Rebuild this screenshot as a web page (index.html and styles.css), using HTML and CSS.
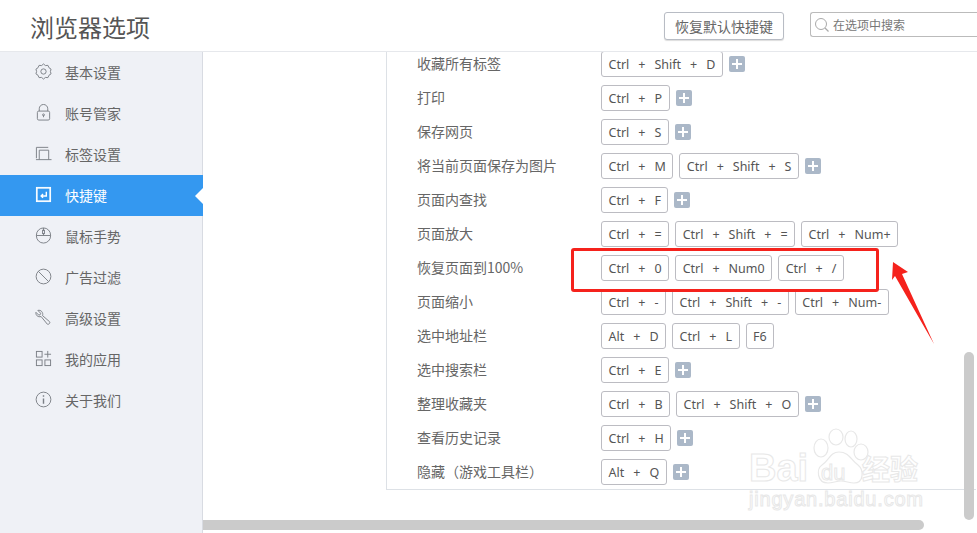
FILE: index.html
```html
<!DOCTYPE html>
<html lang="zh-CN">
<head>
<meta charset="utf-8">
<title>浏览器选项</title>
<link rel="stylesheet" href="styles.css">
</head>
<body>
<div class="app">
  <header class="header">
    <h1 class="title">浏览器选项</h1>
    <button class="reset">恢复默认快捷键</button>
    <div class="search">
      <svg class="search-icon" width="16" height="16" viewBox="0 0 16 16"><circle cx="7" cy="7" r="5.5" fill="none" stroke="#aaa" stroke-width="1"/><path d="M11 11l3.5 3.5" stroke="#aaa" stroke-width="1.2" fill="none"/></svg>
      <span>在选项中搜索</span>
    </div>
  </header>
  <div class="body">
    <nav class="side">
      <a class="nav"><svg class="ico" viewBox="0 0 18 18"><path d="M9 1l2 1.700 2.700-.2 1.100 2.500 2.200 1.500-.7 2.500.7 2.500-2.200 1.500-1.100 2.500-2.700-.2-2 1.700-2-1.700-2.700.2-1.100-2.500-2.200-1.500.7-2.500-.7-2.500 2.200-1.500 1.100-2.500 2.700.2z"/><circle cx="9" cy="9" r="2.800"/></svg>基本设置</a>
      <a class="nav"><svg class="ico" viewBox="0 0 18 18"><rect x="2.500" y="7.500" width="13" height="9.500" rx="1.500"/><path d="M4.500 7.500V5a4.500 4.500 0 0 1 9 0v2.500"/><circle cx="9" cy="11.500" r="1"/><path d="M9 12v2"/></svg>账号管家</a>
      <a class="nav"><svg class="ico" viewBox="0 0 18 18"><path d="M1.500 14V2.500H14M4.500 15.500V5.500h10v10M1 15.500h16.500"/></svg>标签设置</a>
      <a class="nav active"><svg class="ico" viewBox="0 0 18 18"><rect x="1.500" y="1.500" width="15" height="15" fill="#fff" stroke="#fff"/><rect x="2.800" y="2.800" width="12.400" height="12.400" fill="#3498f0" stroke="none"/><path d="M12 6v4.500H6.500M8.500 8.500l-2 2 2 2" stroke="#fff" stroke-width="1.500"/></svg>快捷键</a>
      <a class="nav"><svg class="ico" viewBox="0 0 18 18"><rect x="1.500" y="1" width="15" height="16" rx="7.500"/><path d="M1.500 9h15M9 1v3M9 7v2"/><rect x="8" y="3.500" width="2" height="3.500"/></svg>鼠标手势</a>
      <a class="nav"><svg class="ico" viewBox="0 0 18 18"><circle cx="9" cy="9" r="7.800"/><path d="M3.500 3.500l11 11"/></svg>广告过滤</a>
      <a class="nav"><svg class="ico" viewBox="0 0 18 18"><path d="M3 1.500l3 3-.5 1.500-1.500.5-3-3C.5 6.500 3 9 6.500 8l6.500 8c1 1 3.500-1 2.500-2.500L8 7C9 4 6.500.5 3 1.500z"/></svg>高级设置</a>
      <a class="nav"><svg class="ico" viewBox="0 0 18 18"><rect x="1.500" y="1.500" width="6" height="6"/><rect x="1.500" y="10.500" width="6" height="6"/><rect x="10.500" y="10.500" width="6" height="6"/><path d="M13.500 1v7M10 4.500h7"/></svg>我的应用</a>
      <a class="nav"><svg class="ico" viewBox="0 0 18 18"><circle cx="9" cy="9" r="7.800"/><path d="M9 8v5.500M9 4.500v1.500" stroke-width="1.500"/></svg>关于我们</a>
    </nav>
    <main class="main">
      <section class="panel">
        <div class="row"><span class="label">收藏所有标签</span><span class="key"><i>Ctrl</i><i>+</i><i>Shift</i><i>+</i><i>D</i></span><b class="add"></b></div>
        <div class="row"><span class="label">打印</span><span class="key"><i>Ctrl</i><i>+</i><i>P</i></span><b class="add"></b></div>
        <div class="row"><span class="label">保存网页</span><span class="key"><i>Ctrl</i><i>+</i><i>S</i></span><b class="add"></b></div>
        <div class="row"><span class="label">将当前页面保存为图片</span><span class="key"><i>Ctrl</i><i>+</i><i>M</i></span><span class="key"><i>Ctrl</i><i>+</i><i>Shift</i><i>+</i><i>S</i></span><b class="add"></b></div>
        <div class="row"><span class="label">页面内查找</span><span class="key"><i>Ctrl</i><i>+</i><i>F</i></span><b class="add"></b></div>
        <div class="row"><span class="label">页面放大</span><span class="key"><i>Ctrl</i><i>+</i><i>=</i></span><span class="key"><i>Ctrl</i><i>+</i><i>Shift</i><i>+</i><i>=</i></span><span class="key"><i>Ctrl</i><i>+</i><i>Num+</i></span></div>
        <div class="row"><span class="label">恢复页面到100%</span><span class="key"><i>Ctrl</i><i>+</i><i>0</i></span><span class="key"><i>Ctrl</i><i>+</i><i>Num0</i></span><span class="key"><i>Ctrl</i><i>+</i><i>/</i></span></div>
        <div class="row"><span class="label">页面缩小</span><span class="key"><i>Ctrl</i><i>+</i><i>-</i></span><span class="key"><i>Ctrl</i><i>+</i><i>Shift</i><i>+</i><i>-</i></span><span class="key"><i>Ctrl</i><i>+</i><i>Num-</i></span></div>
        <div class="row"><span class="label">选中地址栏</span><span class="key"><i>Alt</i><i>+</i><i>D</i></span><span class="key"><i>Ctrl</i><i>+</i><i>L</i></span><span class="key"><i>F6</i></span></div>
        <div class="row"><span class="label">选中搜索栏</span><span class="key"><i>Ctrl</i><i>+</i><i>E</i></span><b class="add"></b></div>
        <div class="row"><span class="label">整理收藏夹</span><span class="key"><i>Ctrl</i><i>+</i><i>B</i></span><span class="key"><i>Ctrl</i><i>+</i><i>Shift</i><i>+</i><i>O</i></span><b class="add"></b></div>
        <div class="row"><span class="label">查看历史记录</span><span class="key"><i>Ctrl</i><i>+</i><i>H</i></span><b class="add"></b></div>
        <div class="row"><span class="label label-wide">隐藏（游戏工具栏）</span><span class="key"><i>Alt</i><i>+</i><i>Q</i></span><b class="add"></b></div>
      </section>
      <div class="vbar"></div>
      <div class="hbar"></div>
    </main>
  </div>
  <div class="redbox"></div>
  <svg class="arrow" width="50" height="90" viewBox="0 0 50 90"><path d="M1 1L16 11 10 13 42 83 3 15 0 19z" fill="#f5221c"/></svg>
  <div class="wm wm-paw">
    <svg width="62" height="58" viewBox="0 0 62 58" fill="#fff" stroke="#e8e8e8" stroke-width="1.200"><ellipse cx="12" cy="20" rx="7" ry="9"/><ellipse cx="27" cy="9" rx="7" ry="8"/><ellipse cx="42" cy="11" rx="6" ry="8"/><ellipse cx="52" cy="24" rx="7" ry="8"/><path d="M30 24c-9 0-10 9-17 13-6 4-5 18 6 18 5 0 8-2 13-2s8 2 13 2c10 0 10-13 4-18-7-5-9-13-19-13z"/></svg>
  </div>
  <span class="wm wm-bai">Bai</span><span class="wm wm-du">du</span><span class="wm wm-jy">经验</span><span class="wm wm-url">jingyan.baidu.com</span>
</div>
</body>
</html>
```
FILE: styles.css
```css
* { box-sizing: border-box; }
html, body { margin: 0; padding: 0; height: 100%; overflow: hidden; background: #fff; }
body { font-family: "Noto Sans CJK SC", "Noto Sans", sans-serif; color: #666; }
.app { position: relative; width: 977px; height: 533px; overflow: hidden; display: flex; flex-direction: column; }
.header { height: 52px; flex: none; display: flex; align-items: flex-start; border-bottom: 1px solid #e6e8ec; padding-left: 30px; }
.title { margin: 10px 0 0; font-size: 24px; line-height: 34px; font-weight: 400; color: #555; width: 634px; flex: none; }
.reset { margin-top: 12px; width: 120px; height: 28px; flex: none; padding: 0; background: #fff; border: 1px solid #b8bcc4; border-radius: 3px; font: 14px/26px "Noto Sans CJK SC", sans-serif; color: #666; box-shadow: 0 1px 1px #ddd; }
.search { margin: 12px 0 0 26px; width: 170px; flex: none; height: 25px; border: 1px solid #bbb; border-right: 0; border-radius: 3px 0 0 3px; display: flex; align-items: center; font-size: 12px; color: #777; padding-left: 3px; gap: 3px; }
.search-icon { flex: none; }
.body { flex: 1; display: flex; min-height: 0; }
.side { width: 203px; flex: none; background: #eff1f6; border-right: 1px solid #d8dbe2; }
.nav { height: 41px; display: flex; align-items: center; font-size: 14px; color: #666; padding: 0 0 2px 35px; gap: 13px; position: relative; }
.nav.active { background: #3498f0; color: #fff; width: 203px; }
.nav.active::after { content: ""; position: absolute; right: 0; top: 13px; border: 8px solid transparent; border-right-color: #fff; border-left-width: 0; }
.ico { width: 17px; height: 17px; flex: none; fill: none; stroke: #7b7f86; stroke-width: 1; }
.main { flex: 1; position: relative; overflow: hidden; }
.panel { margin: -5px 0 0 183px; width: 590px; height: 443px; border-left: 1px solid #dde1e6; border-bottom: 1px solid #dde1e6; padding-left: 30px; }
.row { height: 34px; display: flex; align-items: center; gap: 6px; white-space: nowrap; }
.label { width: 184px; margin-right: -6px; margin-bottom: 2px; flex: none; font-size: 14px; color: #666; }
.label-wide { word-spacing: 0; font-feature-settings: "fwid" 1; }
.key { height: 26px; display: inline-flex; align-items: center; gap: 9px; padding: 0 6.5px; background: #fff; border: 1px solid #bcbcc2; border-radius: 3px; font: 12.5px "Noto Sans", sans-serif; color: #555; }
.key i { font-style: normal; }
.add { width: 16px; height: 16px; background: #abb8c8; border-radius: 2px; position: relative; flex: none; }
.add::before, .add::after { content: ""; position: absolute; background: #fff; }
.add::before { left: 3px; right: 3px; top: 7px; height: 2px; }
.add::after { top: 3px; bottom: 3px; left: 7px; width: 2px; }
.vbar { position: absolute; left: 761px; top: 300px; width: 10px; height: 168px; background: #cbcbcb; border-radius: 5px; }
.hbar { position: absolute; left: 0; top: 468px; width: 721px; height: 10px; background: #cbcbcb; border-radius: 0 5px 5px 0; }
.redbox { position: absolute; left: 571px; top: 248px; width: 308px; height: 44px; border: 3px solid #f5221c; border-radius: 3px; }
.arrow { position: absolute; left: 892px; top: 261px; }
.wm { position: absolute; color: #fff; -webkit-text-stroke: 1px #e8e8e8; font-family: "Liberation Sans", sans-serif; }
.wm-paw { left: 809px; top: 428px; -webkit-text-stroke: 0; line-height: 0; }
.wm-bai { left: 749px; top: 448px; font-size: 38px; line-height: 40px; font-weight: 700; }
.wm-du { left: 821px; top: 462px; font-size: 22px; line-height: 22px; }
.wm-jy { left: 862px; top: 452px; font-size: 28px; line-height: 32px; font-family: "Noto Sans CJK SC", sans-serif; font-weight: 700; }
.wm-url { left: 749px; top: 486px; font-size: 20px; line-height: 26px; letter-spacing: .8px; }
```
